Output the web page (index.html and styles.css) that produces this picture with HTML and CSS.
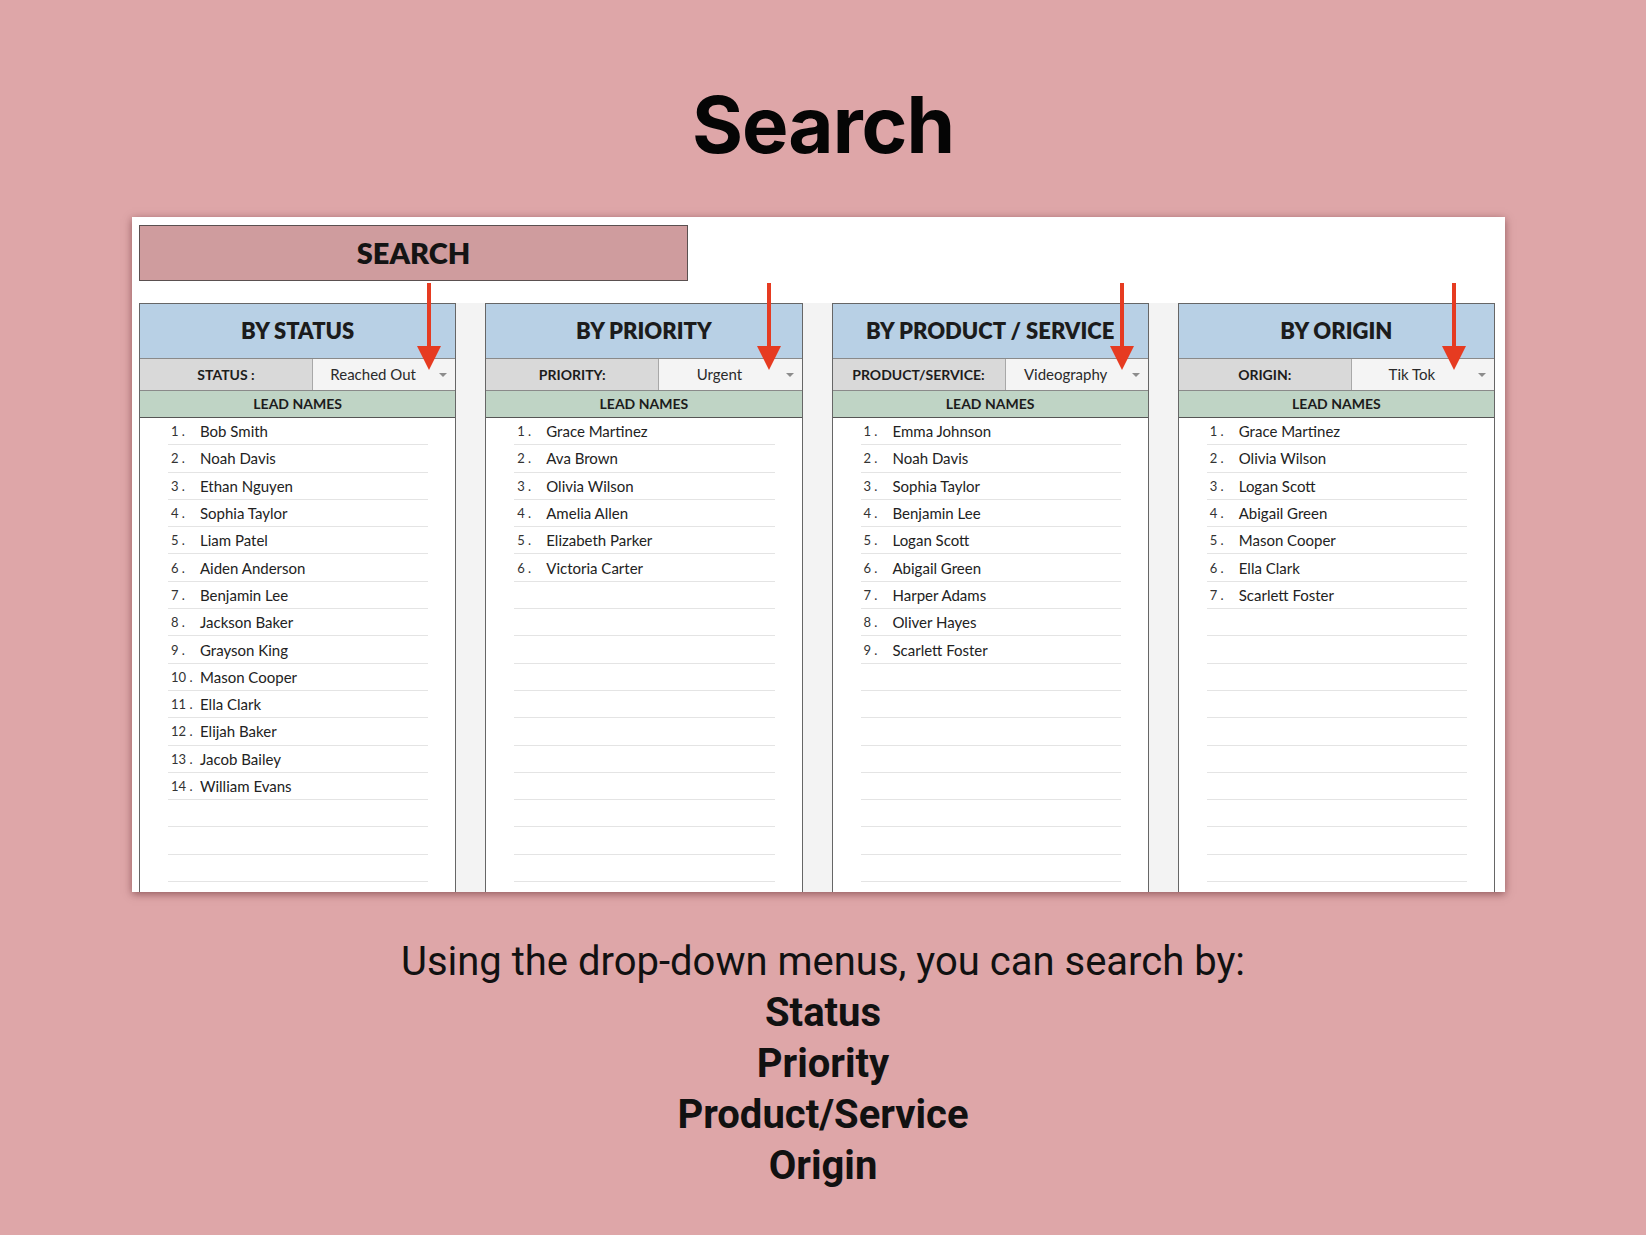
FILE: index.html
```html
<!DOCTYPE html>
<html lang="en">
<head>
    <meta charset="UTF-8">
    <meta name="viewport" content="width=device-width, initial-scale=1.0">
    <title>Search</title>
    <link rel="stylesheet" href="styles.css">
</head>
<body>
    <h1 class="page-title">Search</h1>

    <div class="sheet">
        <div class="search-banner">SEARCH</div>

        <!-- red pointers to each drop-down -->
        <span class="pointer p1"></span>
        <span class="pointer p2"></span>
        <span class="pointer p3"></span>
        <span class="pointer p4"></span>

        <div class="search-grid">
            <div class="search-col">
                <div class="col-header">BY STATUS</div>
                <div class="filter-row">
                    <div class="filter-label">STATUS :</div>
                    <div class="filter-value">Reached Out<span class="caret"></span></div>
                </div>
                <div class="lead-title">LEAD NAMES</div>
                <ul class="lead-list">
                    <li><span class="num">1 .</span>Bob Smith</li>
                    <li><span class="num">2 .</span>Noah Davis</li>
                    <li><span class="num">3 .</span>Ethan Nguyen</li>
                    <li><span class="num">4 .</span>Sophia Taylor</li>
                    <li><span class="num">5 .</span>Liam Patel</li>
                    <li><span class="num">6 .</span>Aiden Anderson</li>
                    <li><span class="num">7 .</span>Benjamin Lee</li>
                    <li><span class="num">8 .</span>Jackson Baker</li>
                    <li><span class="num">9 .</span>Grayson King</li>
                    <li><span class="num">10 .</span>Mason Cooper</li>
                    <li><span class="num">11 .</span>Ella Clark</li>
                    <li><span class="num">12 .</span>Elijah Baker</li>
                    <li><span class="num">13 .</span>Jacob Bailey</li>
                    <li><span class="num">14 .</span>William Evans</li>
                    <li></li>
                    <li></li>
                    <li></li>
                </ul>
            </div>

            <div class="search-col">
                <div class="col-header">BY PRIORITY</div>
                <div class="filter-row">
                    <div class="filter-label">PRIORITY:</div>
                    <div class="filter-value">Urgent<span class="caret"></span></div>
                </div>
                <div class="lead-title">LEAD NAMES</div>
                <ul class="lead-list">
                    <li><span class="num">1 .</span>Grace Martinez</li>
                    <li><span class="num">2 .</span>Ava Brown</li>
                    <li><span class="num">3 .</span>Olivia Wilson</li>
                    <li><span class="num">4 .</span>Amelia Allen</li>
                    <li><span class="num">5 .</span>Elizabeth Parker</li>
                    <li><span class="num">6 .</span>Victoria Carter</li>
                    <li></li>
                    <li></li>
                    <li></li>
                    <li></li>
                    <li></li>
                    <li></li>
                    <li></li>
                    <li></li>
                    <li></li>
                    <li></li>
                    <li></li>
                </ul>
            </div>

            <div class="search-col">
                <div class="col-header">BY PRODUCT / SERVICE</div>
                <div class="filter-row">
                    <div class="filter-label">PRODUCT/SERVICE:</div>
                    <div class="filter-value">Videography<span class="caret"></span></div>
                </div>
                <div class="lead-title">LEAD NAMES</div>
                <ul class="lead-list">
                    <li><span class="num">1 .</span>Emma Johnson</li>
                    <li><span class="num">2 .</span>Noah Davis</li>
                    <li><span class="num">3 .</span>Sophia Taylor</li>
                    <li><span class="num">4 .</span>Benjamin Lee</li>
                    <li><span class="num">5 .</span>Logan Scott</li>
                    <li><span class="num">6 .</span>Abigail Green</li>
                    <li><span class="num">7 .</span>Harper Adams</li>
                    <li><span class="num">8 .</span>Oliver Hayes</li>
                    <li><span class="num">9 .</span>Scarlett Foster</li>
                    <li></li>
                    <li></li>
                    <li></li>
                    <li></li>
                    <li></li>
                    <li></li>
                    <li></li>
                    <li></li>
                </ul>
            </div>

            <div class="search-col">
                <div class="col-header">BY ORIGIN</div>
                <div class="filter-row">
                    <div class="filter-label">ORIGIN:</div>
                    <div class="filter-value">Tik Tok<span class="caret"></span></div>
                </div>
                <div class="lead-title">LEAD NAMES</div>
                <ul class="lead-list">
                    <li><span class="num">1 .</span>Grace Martinez</li>
                    <li><span class="num">2 .</span>Olivia Wilson</li>
                    <li><span class="num">3 .</span>Logan Scott</li>
                    <li><span class="num">4 .</span>Abigail Green</li>
                    <li><span class="num">5 .</span>Mason Cooper</li>
                    <li><span class="num">6 .</span>Ella Clark</li>
                    <li><span class="num">7 .</span>Scarlett Foster</li>
                    <li></li>
                    <li></li>
                    <li></li>
                    <li></li>
                    <li></li>
                    <li></li>
                    <li></li>
                    <li></li>
                    <li></li>
                    <li></li>
                </ul>
            </div>
        </div>
    </div>

    <div class="caption">
        <p>Using the drop-down menus, you can search by:</p>
        <p class="strong">Status</p>
        <p class="strong">Priority</p>
        <p class="strong">Product/Service</p>
        <p class="strong">Origin</p>
    </div>
</body>
</html>
```

FILE: styles.css
```css
body {
    margin: 0;
    background-color: #dea6a8;
    font-family: Lato, 'Open Sans', sans-serif;
    color: #1c1c1c;
}

.page-title {
    margin: 0;
    padding-top: 85px;
    font-family: Inter, sans-serif;
    font-weight: 700;
    font-size: 78px;
    line-height: 80px;
    letter-spacing: -1px;
    text-align: center;
    color: #050505;
}

/* spreadsheet card */
.sheet {
    position: relative;
    width: 1373px;
    height: 675px;
    margin: 52px 0 0 132px;
    padding: 8px 0 0 7px;
    box-sizing: border-box;
    background-color: #fff;
    overflow: hidden;
    box-shadow: 0 2px 8px rgba(80, 25, 30, 0.55);
}

.search-banner {
    width: 549px;
    height: 56px;
    box-sizing: border-box;
    border: 1px solid #5a5050;
    background-color: #cf9c9e;
    font-weight: 800;
    font-size: 29px;
    line-height: 54px;
    text-align: center;
    color: #141414;
}

.search-grid {
    display: grid;
    grid-template-columns: repeat(4, 1fr);
    gap: 29px;
    width: 1356px;
    height: 600px;
    margin-top: 22px;
    background-color: #f3f3f3;
}

.search-col {
    background-color: #fff;
    border: 1px solid #666;
    border-bottom: none;
}

.col-header {
    height: 54px;
    background-color: #b8d0e5;
    font-weight: 800;
    font-size: 22px;
    line-height: 54px;
    text-align: center;
}

.filter-row {
    display: flex;
    height: 31px;
    border-top: 1px solid #8a8a8a;
    font-size: 14px;
    line-height: 31px;
}

.filter-label {
    width: 172px;
    border-right: 1px solid #a8a8a8;
    background-color: #d9d9d9;
    font-weight: 700;
    text-align: center;
}

.filter-value {
    position: relative;
    flex: 1;
    padding-right: 22px;
    background-color: #f4f4f4;
    font-size: 15px;
    text-align: center;
    color: #2a2a2a;
}

.caret {
    position: absolute;
    right: 8px;
    top: 14px;
    border-left: 4px solid transparent;
    border-right: 4px solid transparent;
    border-top: 4px solid #8c8c8c;
}

.lead-title {
    height: 26px;
    border-top: 1px solid #8a8a8a;
    border-bottom: 1px solid #555;
    background-color: #bfd4c5;
    font-weight: 700;
    font-size: 14px;
    line-height: 26px;
    text-align: center;
}

.lead-list {
    list-style: none;
    margin: 0 27px 0 28px;
    padding: 0;
}

.lead-list li {
    display: flex;
    align-items: center;
    height: 27.3px;
    box-sizing: border-box;
    border-bottom: 1px solid #e4e4e4;
    font-size: 15px;
    color: #222;
}

.num {
    width: 29px;
    padding-left: 3px;
    font-size: 13px;
    color: #333;
}

/* red arrows pointing at the drop-downs */
.pointer {
    position: absolute;
    z-index: 2;
    top: 66px;
    width: 4px;
    height: 64px;
    margin-left: -2px;
    background-color: #e63b21;
}

.pointer::after {
    content: "";
    position: absolute;
    left: -10px;
    bottom: -23px;
    border-left: 12px solid transparent;
    border-right: 12px solid transparent;
    border-top: 24px solid #e63b21;
}

.p1 { left: 297px; }
.p2 { left: 637px; }
.p3 { left: 990px; }
.p4 { left: 1322px; }

.caption {
    margin-top: 44px;
    text-align: center;
    font-family: Roboto, sans-serif;
    font-size: 40px;
    line-height: 51px;
    color: #111;
}

.caption p {
    margin: 0;
}

.caption .strong {
    font-weight: 700;
}
```
